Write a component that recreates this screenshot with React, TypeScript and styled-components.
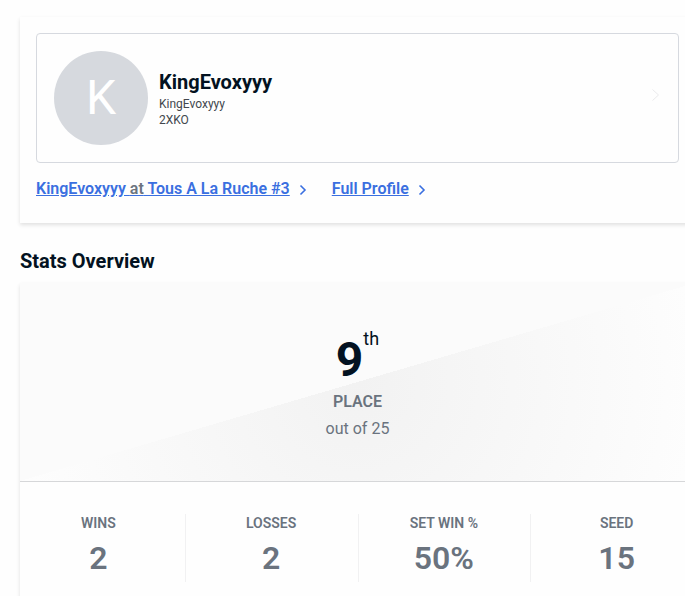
import React from "react";
import styled, { createGlobalStyle } from "styled-components";

const GlobalStyle = createGlobalStyle`
  *, *::before, *::after { box-sizing: border-box; }
  body {
    margin: 0;
    background: #fefefe;
    color: #031221;
    font-family: Roboto, "Liberation Sans", sans-serif;
    font-size: 16px;
    line-height: 24px;
    overflow: hidden;
  }
`;

const Page = styled.main`
  padding: 17px 0 0 20px;
  margin-right: -10px;
`;

const Panel = styled.section`
  background: #fefefe;
  box-shadow: 0 2px 4px rgba(0, 0, 0, 0.12);
`;

const ProfilePanel = styled(Panel)`
  padding: 16px 16px 22px;
`;

const ProfileCard = styled.a`
  display: flex;
  align-items: center;
  gap: 11px;
  padding: 17px;
  border: 1px solid #d6d9df;
  border-radius: 4px;
  color: inherit;
  text-decoration: none;
`;

const Avatar = styled.span`
  display: flex;
  align-items: center;
  justify-content: center;
  width: 94px;
  height: 94px;
  border-radius: 50%;
  background: #d6d9de;
  color: #fff;
  font-size: 48px;
`;

const Identity = styled.span`
  display: flex;
  flex: 1;
  flex-direction: column;
  color: #42474d;
  font-size: 12px;
  line-height: 16px;
`;

const Name = styled.strong`
  color: #031221;
  font-size: 20px;
  font-weight: 700;
  line-height: 28px;
`;

const Links = styled.nav`
  display: flex;
  gap: 24px;
  margin-top: 14px;
`;

const LinkItem = styled.span`
  display: flex;
  align-items: center;
  gap: 8px;
  color: #3a6fe0;
`;

const TextLink = styled.a`
  color: #3a6fe0;
  font-weight: 600;
  text-decoration: underline;
`;

const Muted = styled.span`
  color: #6b7480;
`;

const Title = styled.h2`
  margin: 24px 0 8px;
  font-size: 20px;
  font-weight: 700;
  line-height: 28px;
`;

const Hero = styled.div`
  display: flex;
  flex-direction: column;
  align-items: center;
  padding: 46px 16px 38px;
  border-bottom: 1px solid #d6d7d9;
  background:
    linear-gradient(to bottom right, #fbfbfb 50%, transparent 50%),
    radial-gradient(circle 340px at center, #f2f2f2, #fdfdfd);
  color: #6a737e;
`;

const Placement = styled.div`
  display: flex;
  align-items: flex-start;
  color: #031221;
`;

const Rank = styled.span`
  padding: 3px 0 1px;
  font-size: 48px;
  font-weight: 700;
  line-height: 56px;
`;

const Ordinal = styled.span`
  font-size: 18px;
  line-height: 20px;
`;

const PlaceLabel = styled.div`
  font-weight: 600;
  line-height: 26px;
`;

const Field = styled.div`
  line-height: 28px;
`;

const Stats = styled.dl`
  display: grid;
  grid-template-columns: repeat(4, 1fr);
  margin: 0 -8px;
  padding: 32px 0;
`;

const Stat = styled.div`
  padding: 0 1px 4px 0;
  border-left: 1px solid #f1f1f2;
  color: #6a737e;
  font-weight: 600;
  text-align: center;

  &:first-child {
    border-left-color: transparent;
  }
`;

const StatLabel = styled.dt`
  font-size: 14px;
  line-height: 18px;
`;

const StatValue = styled.dd`
  margin: 6px 0 0;
  font-size: 32px;
  line-height: 40px;
`;

const ChevronSvg = styled.svg<{ $faint?: boolean }>`
  flex: none;
  color: ${(p) => (p.$faint ? "#eaeaec" : "inherit")};
`;

function Chevron({ faint = false }: { faint?: boolean }) {
  return (
    <ChevronSvg
      $faint={faint}
      width="10"
      height="18"
      viewBox="0 0 10 18"
      fill="none"
      stroke="currentColor"
      strokeWidth={faint ? 1 : 1.6}
      aria-hidden="true"
    >
      <path d={faint ? "M1.5 .5 7.5 6 1.5 11.5" : "M2.5 5.5 7 10 2.5 14.5"} />
    </ChevronSvg>
  );
}

const stats = [
  { label: "WINS", value: "2" },
  { label: "LOSSES", value: "2" },
  { label: "SET WIN %", value: "50%" },
  { label: "SEED", value: "15" },
];

export default function App() {
  return (
    <>
      <GlobalStyle />
      <Page>
        <ProfilePanel>
          <ProfileCard href="#profile">
            <Avatar aria-hidden="true">K</Avatar>
            <Identity>
              <Name>KingEvoxyyy</Name>
              <span>KingEvoxyyy</span>
              <span>2XKO</span>
            </Identity>
            <Chevron faint />
          </ProfileCard>
          <Links>
            <LinkItem>
              <TextLink href="#tournament">
                KingEvoxyyy <Muted>at</Muted> Tous A La Ruche #3
              </TextLink>
              <Chevron />
            </LinkItem>
            <LinkItem>
              <TextLink href="#full-profile">Full Profile</TextLink>
              <Chevron />
            </LinkItem>
          </Links>
        </ProfilePanel>

        <Title>Stats Overview</Title>
        <Panel>
          <Hero>
            <Placement>
              <Rank>9</Rank>
              <Ordinal>th</Ordinal>
            </Placement>
            <PlaceLabel>PLACE</PlaceLabel>
            <Field>out of 25</Field>
          </Hero>
          <Stats>
            {stats.map((s) => (
              <Stat key={s.label}>
                <StatLabel>{s.label}</StatLabel>
                <StatValue>{s.value}</StatValue>
              </Stat>
            ))}
          </Stats>
        </Panel>
      </Page>
    </>
  );
}
